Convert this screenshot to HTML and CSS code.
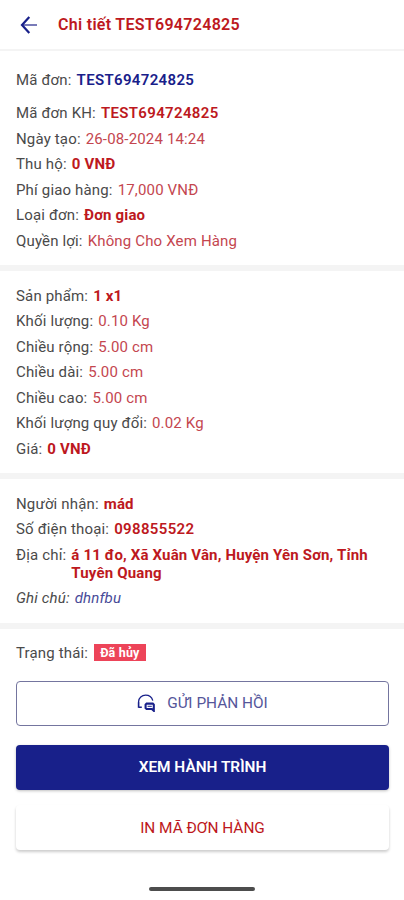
FILE: index.html
```html
<!DOCTYPE html>
<html lang="vi">

<head>
    <meta charset="UTF-8">
    <meta name="viewport" content="width=device-width, initial-scale=1.0">
    <title>Chi tiết TEST694724825</title>
    <link rel="stylesheet" href="styles.css">
</head>

<body>
    <header class="topbar">
        <svg class="back" viewBox="0 0 18 18" fill="none" stroke="currentColor">
            <path class="shaft" d="M2 9 H17" stroke-width="1.8" />
            <path d="M9.3 1 L2 9 L9.3 17" stroke-width="2.2" />
        </svg>
        <h1>Chi tiết TEST694724825</h1>
    </header>

    <main>
        <section class="block">
            <div class="row first"><span class="label">Mã đơn:</span><b class="code">TEST694724825</b></div>
            <div class="row"><span class="label">Mã đơn KH:</span><b class="code">TEST694724825</b></div>
            <div class="row"><span class="label">Ngày tạo:</span><span class="value">26-08-2024 14:24</span></div>
            <div class="row"><span class="label">Thu hộ:</span><b>0 VNĐ</b></div>
            <div class="row"><span class="label">Phí giao hàng:</span><span class="value">17,000 VNĐ</span></div>
            <div class="row"><span class="label">Loại đơn:</span><b>Đơn giao</b></div>
            <div class="row"><span class="label">Quyền lợi:</span><span class="value">Không Cho Xem Hàng</span></div>
        </section>

        <section class="block">
            <div class="row"><span class="label">Sản phẩm:</span><b>1 x1</b></div>
            <div class="row"><span class="label">Khối lượng:</span><span class="value">0.10 Kg</span></div>
            <div class="row"><span class="label">Chiều rộng:</span><span class="value">5.00 cm</span></div>
            <div class="row"><span class="label">Chiều dài:</span><span class="value">5.00 cm</span></div>
            <div class="row"><span class="label">Chiều cao:</span><span class="value">5.00 cm</span></div>
            <div class="row"><span class="label">Khối lượng quy đổi:</span><span class="value">0.02 Kg</span></div>
            <div class="row"><span class="label">Giá:</span><b>0 VNĐ</b></div>
        </section>

        <section class="block">
            <div class="row"><span class="label">Người nhận:</span><b>mád</b></div>
            <div class="row"><span class="label">Số điện thoại:</span><b class="code">098855522</b></div>
            <div class="row"><span class="label">Địa chỉ:</span><b>á 11 đo, Xã Xuân Vân, Huyện Yên Sơn, Tỉnh Tuyên Quang</b></div>
            <div class="row note"><span class="label">Ghi chú:</span><span class="value">dhnfbu</span></div>
        </section>

        <section class="block">
            <div class="row"><span class="label">Trạng thái:</span><span class="badge">Đã hủy</span></div>
            <div class="actions">
                <button class="btn outline">
                    <svg class="support" viewBox="0 0 18 18" fill="none" stroke="currentColor">
                        <path d="M1.6 9 V7.5 C1.8 3.8 4.8 1.2 8.6 1.2 S14.8 3.2 15.8 6.6" stroke-width="1.3" />
                        <path d="M1.6 8.4 V13.8 M1.6 13.2 H4.8" stroke-width="1.6" />
                        <path d="M9.6 9.6 H15.8 L16.8 10.6 V16.8 L14.8 15 H9.6 L8.6 14 V10.6 Z" stroke-width="2.1" />
                        <path d="M10.6 12.3 H14.8" stroke-width="1" />
                    </svg>
                    <span>GỬI PHẢN HỒI</span>
                </button>
                <button class="btn primary">XEM HÀNH TRÌNH</button>
                <button class="btn print">IN MÃ ĐƠN HÀNG</button>
            </div>
        </section>
    </main>

    <div class="home-bar"></div>
</body>

</html>
```

FILE: styles.css
```css
* {
    margin: 0;
    padding: 0;
    box-sizing: border-box;
    font-family: Roboto, 'Liberation Sans', sans-serif;
}

:root {
    --navy: #18208a;
    --red: #bd1820;
    --line: #f4f4f4;
}

body {
    height: 900px;
    background-color: #fff;
    color: #4a4a4a;
    font-size: 15px;
    line-height: 18px;
    letter-spacing: 0.16px;
    overflow: hidden;
}

.topbar {
    display: flex;
    align-items: center;
    gap: 20px;
    height: 51px;
    padding-left: 20px;
    border-bottom: 2px solid var(--line);
}

.back {
    width: 18px;
    height: 18px;
    color: var(--navy);
}

.shaft {
    stroke: #6a6db0;
}

h1 {
    font-size: 16px;
    font-weight: 600;
    letter-spacing: 0.3px;
    color: var(--red);
}

.block {
    display: flex;
    flex-direction: column;
    gap: 7.5px;
    padding: 15.5px 15px 15.5px 16px;
    border-bottom: 6.5px solid var(--line);
}

.block:first-child {
    padding-top: 20.2px;
}

.block:last-child {
    border-bottom: none;
}

.row {
    display: flex;
    gap: 5px;
}

.first {
    margin-bottom: 7.5px;
}

.label {
    flex-shrink: 0;
}

.value {
    color: #c4464f;
}

b {
    font-weight: 700;
    color: var(--red);
}

.code {
    font-weight: 600;
    letter-spacing: 0.35px;
}

.first b {
    color: var(--navy);
}

.note {
    font-style: italic;
}

.note .value {
    color: #484b98;
}

.badge {
    height: 17px;
    margin-left: 1px;
    padding: 0 6px;
    background-color: #ed4459;
    color: #fff;
    font-size: 12.5px;
    font-weight: 700;
    line-height: 18px;
}

.actions {
    display: flex;
    flex-direction: column;
    gap: 19px;
    margin-top: 11px;
}

.btn {
    display: flex;
    justify-content: center;
    align-items: center;
    gap: 12px;
    height: 45px;
    border: none;
    border-radius: 4px;
    background-color: #fff;
    font-size: 15.4px;
    cursor: pointer;
}

.outline {
    border: 1px solid #74759f;
    color: #55569a;
}

.support {
    width: 18px;
    height: 18px;
    color: var(--navy);
}

.primary {
    background-color: var(--navy);
    color: #fff;
    font-weight: 600;
    box-shadow: 0 1px 3px rgba(0, 0, 0, 0.25);
}

.print {
    margin-top: -3.5px;
    color: var(--red);
    box-shadow: 0 2px 3px rgba(0, 0, 0, 0.2);
}

.home-bar {
    width: 106px;
    height: 4px;
    margin: 21.5px auto 0;
    border-radius: 2px;
    background-color: #4d4d4d;
}
```
